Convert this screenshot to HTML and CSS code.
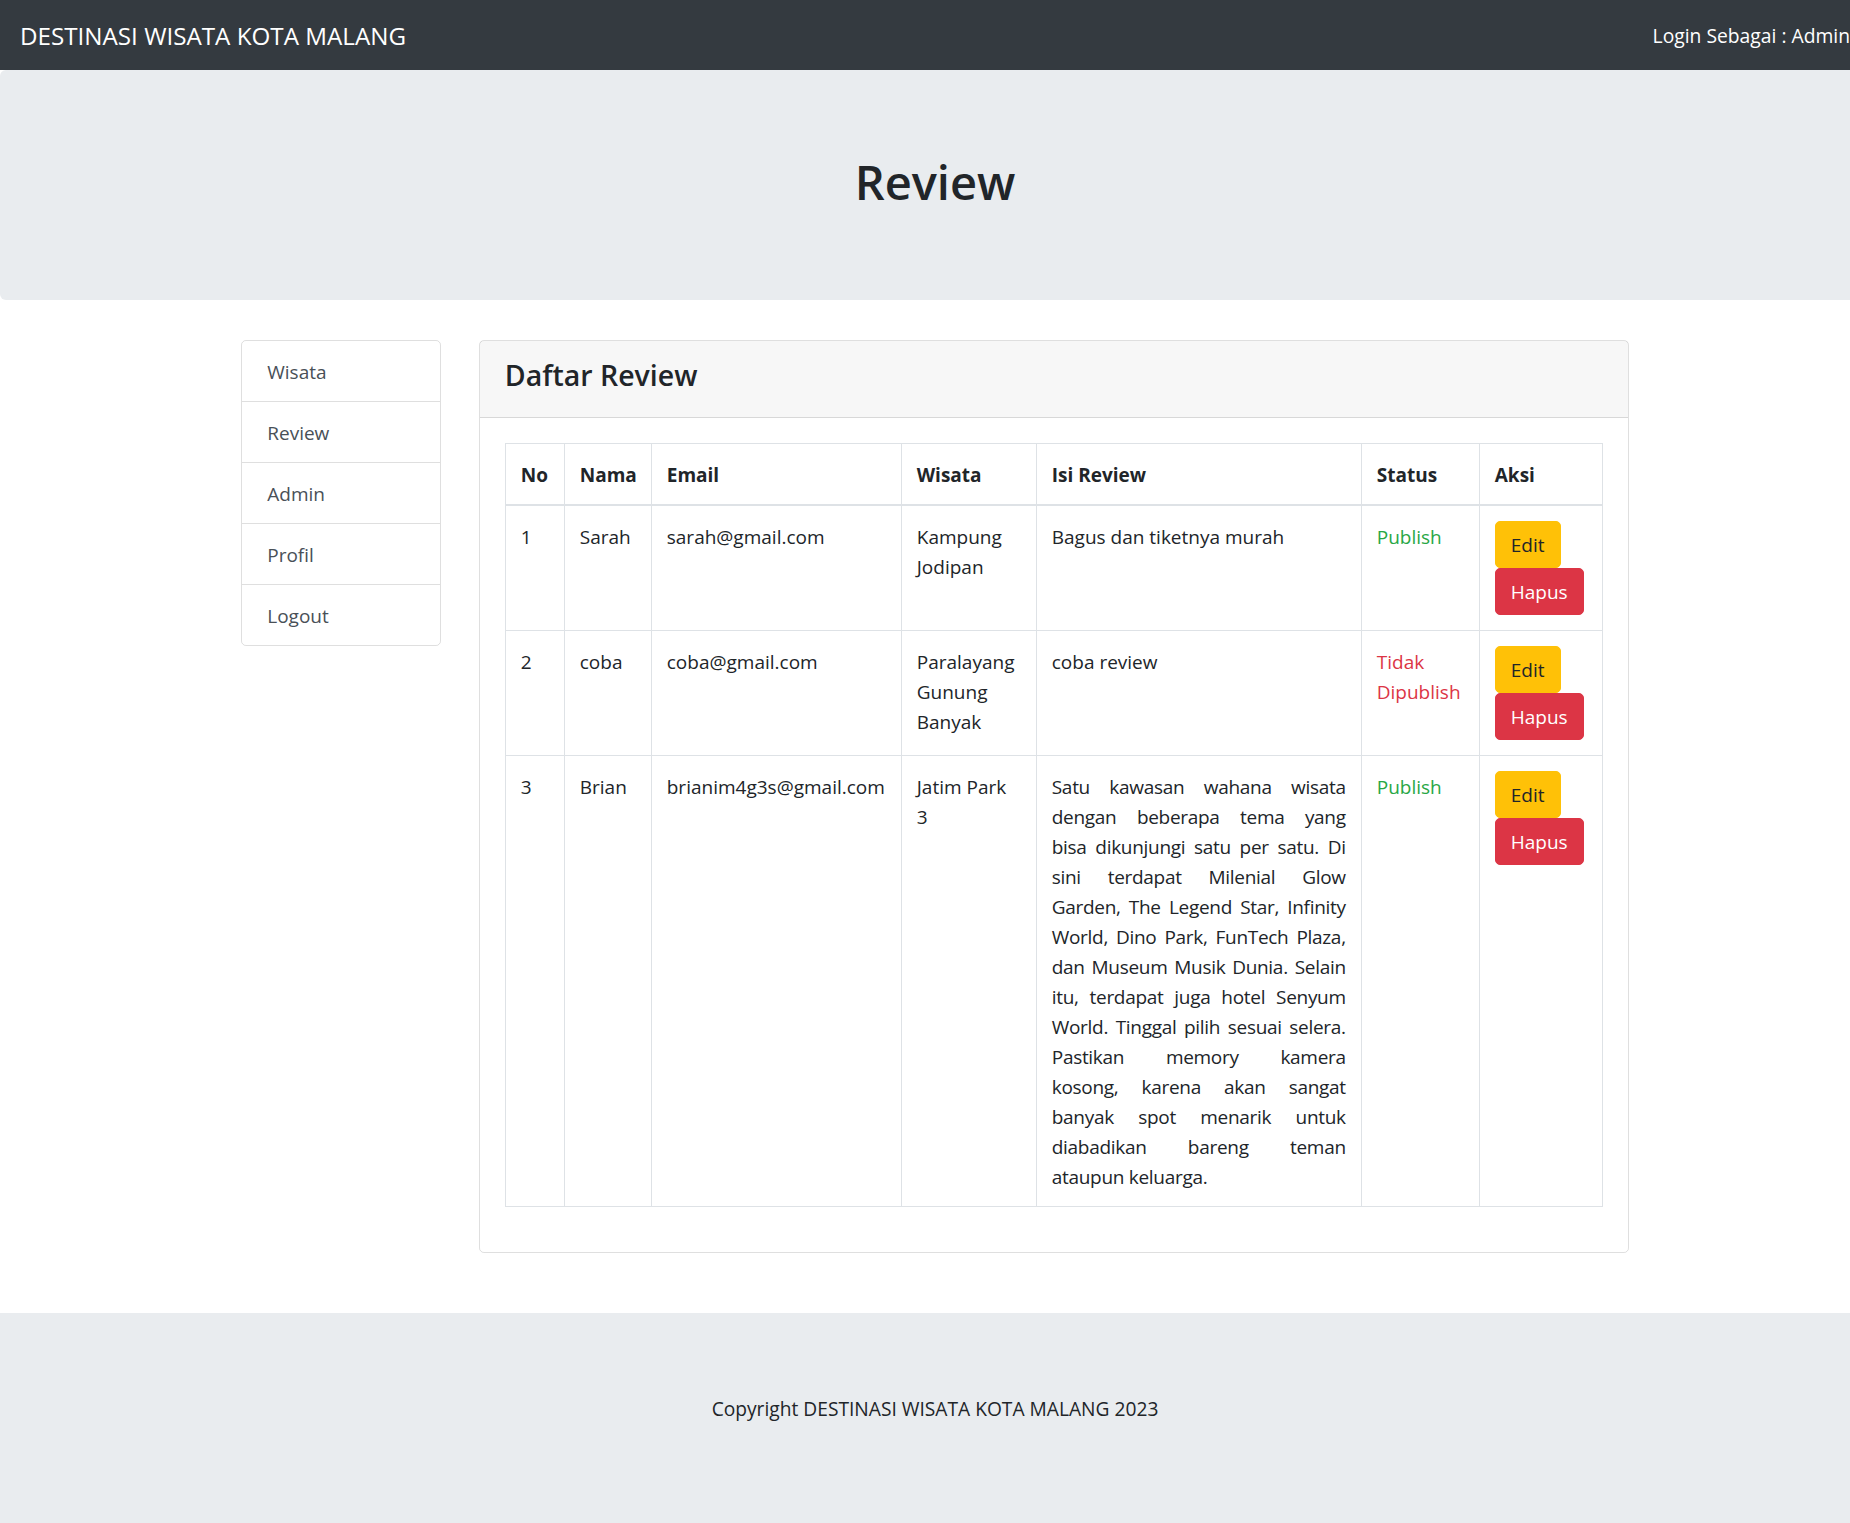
FILE: index.html
```html
<!DOCTYPE html>
<html lang="id">
<head>
<meta charset="utf-8">
<title>Review - Destinasi Wisata Kota Malang</title>
<link rel="stylesheet" href="styles.css">
</head>
<body>
<div class="page">
  <nav class="navbar">
    <a class="brand" href="#">DESTINASI WISATA KOTA MALANG</a>
    <span class="navbar-text">Login Sebagai : Admin</span>
  </nav>

  <header class="jumbotron">
    <h1 class="jumbo-title">Review</h1>
  </header>

  <main class="container">
    <aside class="sidebar">
      <ul class="list-group">
        <li class="list-item"><a href="#">Wisata</a></li>
        <li class="list-item"><a href="#">Review</a></li>
        <li class="list-item"><a href="#">Admin</a></li>
        <li class="list-item"><a href="#">Profil</a></li>
        <li class="list-item"><a href="#">Logout</a></li>
      </ul>
    </aside>

    <section class="card">
      <div class="card-header">
        <h4 class="card-title">Daftar Review</h4>
      </div>
      <div class="card-body">
        <table class="table">
          <colgroup>
            <col class="c-no">
            <col class="c-nama">
            <col class="c-email">
            <col class="c-wisata">
            <col class="c-isi">
            <col class="c-status">
            <col class="c-aksi">
          </colgroup>
          <thead>
            <tr>
              <th>No</th>
              <th>Nama</th>
              <th>Email</th>
              <th>Wisata</th>
              <th>Isi Review</th>
              <th>Status</th>
              <th>Aksi</th>
            </tr>
          </thead>
          <tbody>
            <tr>
              <td>1</td>
              <td>Sarah</td>
              <td>sarah@gmail.com</td>
              <td>Kampung Jodipan</td>
              <td class="isi">Bagus dan tiketnya murah</td>
              <td class="text-success">Publish</td>
              <td class="aksi"><a class="btn btn-warning" href="#">Edit</a> <a class="btn btn-danger" href="#">Hapus</a></td>
            </tr>
            <tr>
              <td>2</td>
              <td>coba</td>
              <td>coba@gmail.com</td>
              <td>Paralayang Gunung Banyak</td>
              <td class="isi">coba review</td>
              <td class="text-danger">Tidak Dipublish</td>
              <td class="aksi"><a class="btn btn-warning" href="#">Edit</a> <a class="btn btn-danger" href="#">Hapus</a></td>
            </tr>
            <tr>
              <td>3</td>
              <td>Brian</td>
              <td>brianim4g3s@gmail.com</td>
              <td>Jatim Park 3</td>
              <td class="isi"><span class="line">Satu kawasan wahana wisata</span> <span class="line">dengan beberapa tema yang</span> <span class="line">bisa dikunjungi satu per satu. Di</span> <span class="line">sini terdapat Milenial Glow</span> <span class="line">Garden, The Legend Star, Infinity</span> <span class="line">World, Dino Park, FunTech Plaza,</span> <span class="line">dan Museum Musik Dunia. Selain</span> <span class="line">itu, terdapat juga hotel Senyum</span> <span class="line">World. Tinggal pilih sesuai selera.</span> <span class="line">Pastikan memory kamera</span> <span class="line">kosong, karena akan sangat</span> <span class="line">banyak spot menarik untuk</span> <span class="line">diabadikan bareng teman</span> <span class="line last">ataupun keluarga.</span></td>
              <td class="text-success">Publish</td>
              <td class="aksi"><a class="btn btn-warning" href="#">Edit</a> <a class="btn btn-danger" href="#">Hapus</a></td>
            </tr>
          </tbody>
        </table>
      </div>
    </section>
  </main>

  <footer class="footer">
    <p class="copyright">Copyright DESTINASI WISATA KOTA MALANG 2023</p>
  </footer>
</div>
</body>
</html>
```

FILE: styles.css
```css
html {
  overflow-x: hidden;
}

body {
  margin: 0;
  font-family: "Open Sans", "Noto Sans", "Liberation Sans", sans-serif;
  font-size: 19px;
  line-height: 30px;
  color: #212529;
  background: #fff;
}

a {
  text-decoration: none;
}

.page {
  width: 1870px;
}

/* Navbar */
.navbar {
  display: flex;
  justify-content: space-between;
  align-items: center;
  padding: 10px 20px;
  background: #343a40;
}

.brand {
  font-size: 24.2px;
  line-height: 37.5px;
  padding: 7px 0 5.5px;
  color: #fff;
}

.navbar-text {
  color: #fff;
  font-size: 19.3px;
  line-height: 30px;
  padding-top: 1px;
}

/* Jumbotron */
.jumbotron {
  background: #e9ecef;
  padding: 82px 40px 78px;
  margin-bottom: 40px;
  border-radius: 6px;
  text-align: center;
}

.jumbo-title {
  margin: 0 0 10px;
  font-size: 47px;
  line-height: 60px;
  font-weight: 600;
}

/* Layout */
.container {
  display: flex;
  gap: 37.5px;
  width: 1387.5px;
  margin: 0 auto;
  align-items: flex-start;
}

.sidebar {
  flex: 0 0 200px;
}

.list-group {
  list-style: none;
  margin: 0;
  padding: 0;
  border: 1px solid rgba(0, 0, 0, 0.125);
  border-radius: 5px;
}

.list-item {
  border-bottom: 1px solid rgba(0, 0, 0, 0.125);
}

.list-item:last-child {
  border-bottom: 0;
}

.list-item a {
  display: block;
  padding: 16px 25px 14px;
  color: #495057;
}

/* Card */
.card {
  flex: 0 0 1150px;
  box-sizing: border-box;
  border: 1px solid rgba(0, 0, 0, 0.125);
  border-radius: 5px;
}

.card-header {
  padding: 15px 25px;
  background: rgba(0, 0, 0, 0.03);
  border-bottom: 1px solid rgba(0, 0, 0, 0.125);
}

.card-title {
  margin: 0 0 9px;
  padding-top: 1px;
  font-size: 28.5px;
  line-height: 36px;
  font-weight: 600;
}

.card-body {
  padding: 25px;
}

/* Table */
.table {
  width: 100%;
  table-layout: fixed;
  border-collapse: collapse;
  margin-bottom: 20px;
}

.c-no { width: 59px; }
.c-nama { width: 87px; }
.c-email { width: 250px; }
.c-wisata { width: 135px; }
.c-isi { width: 325px; }
.c-status { width: 118px; }
.c-aksi { width: 123px; }

.table th,
.table td {
  padding: 16px 15px 14px;
  border: 1px solid #dee2e6;
  vertical-align: top;
  text-align: left;
}

.table td.aksi {
  padding: 15px;
}

.table th {
  font-weight: 700;
}

.table thead th {
  border-bottom-width: 2px;
}

.table td.isi {
  text-align: justify;
}

.line {
  display: block;
  text-align: justify;
  text-align-last: justify;
  letter-spacing: -0.3px;
}

.line.last {
  text-align-last: left;
}

.text-success {
  color: #28a745;
}

.text-danger {
  color: #dc3545;
}

/* Buttons */
.btn {
  display: inline-block;
  padding: 8px 15px 7px;
  border: 1px solid transparent;
  border-radius: 5px;
  font-size: 19px;
  line-height: 30px;
  vertical-align: middle;
}

.btn-warning {
  background: #ffc107;
  border-color: #ffc107;
  color: #212529;
}

.btn-danger {
  background: #dc3545;
  border-color: #dc3545;
  color: #fff;
}

/* Footer */
.footer {
  margin-top: 60px;
  padding: 81px 0 79px;
  background: #e9ecef;
  text-align: center;
}

.copyright {
  margin: 0 0 20px;
  font-size: 19.2px;
}
```
